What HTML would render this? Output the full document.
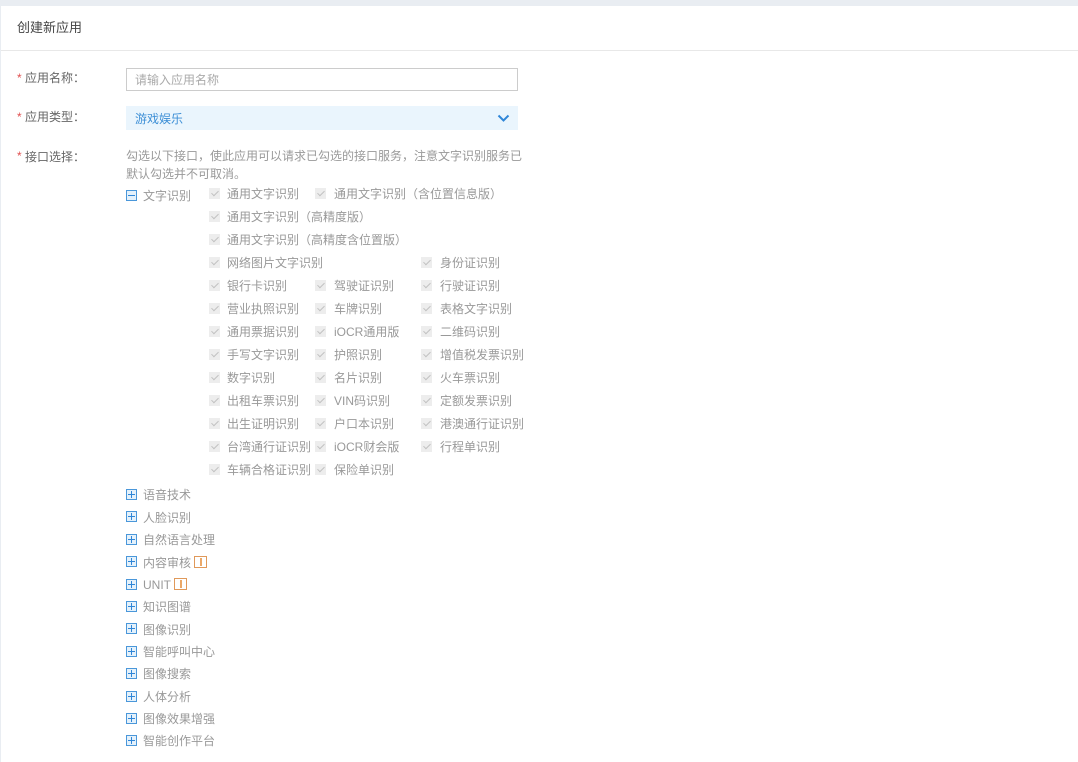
<!DOCTYPE html>
<html lang="zh-CN">
<head>
<meta charset="utf-8">
<title>创建新应用</title>
<style>
html,body{margin:0;padding:0;background:#fff}
body{width:1078px;height:762px;overflow:hidden;position:relative;font-family:"Liberation Sans","Noto Sans CJK SC",sans-serif;font-size:12px;color:#999}
#top{position:absolute;left:0;top:0;width:1078px;height:6px;background:#e9edf2}
#left{position:absolute;left:0;top:6px;width:1px;height:756px;background:#e9edf2}
#hr{position:absolute;left:1px;top:50px;width:1077px;height:1px;background:#e8e8e8}
.a{position:absolute;white-space:nowrap;line-height:18px;height:18px}
.lab{color:#666}
.star{color:#e05050}
#inp{position:absolute;left:126px;top:68px;width:390px;height:21px;border:1px solid #ccc}
#sel{position:absolute;left:126px;top:106px;width:392px;height:24px;background:#eaf5fd}
.c{position:absolute;width:11px;height:11px;background:#ededed;margin:0 0 0 -1px}
.c:after{content:"";position:absolute;left:3.5px;top:1.2px;width:3px;height:6px;border-right:1.5px solid #c2c2c2;border-bottom:1.5px solid #c2c2c2;transform:rotate(45deg)}
.x{position:absolute;width:9px;height:9px;border:1px solid #4a97da;background:#e4f1fb}
.x:before{content:"";position:absolute;left:1px;top:4px;width:7px;height:1px;background:#2f86d8}
.p:after{content:"";position:absolute;left:4px;top:1px;width:1px;height:7px;background:#2f86d8}
.w{position:absolute;width:11px;height:10px;border:1px solid #e0995a}
.w:after{content:"";position:absolute;left:4.5px;top:1px;width:2px;height:8px;background:#eba868}
</style>
</head>
<body>
<div id="top"></div>
<div id="left"></div>
<div class="a" style="left:17px;top:19px;color:#444;font-size:13px">创建新应用</div>
<div id="hr"></div>

<div class="a star" style="left:17px;top:69px">*</div>
<div class="a lab" style="left:25px;top:69px">应用名称&#xFF1A;</div>
<div id="inp"></div>
<div class="a" style="left:135px;top:71px;color:#aaa">请输入应用名称</div>

<div class="a star" style="left:17px;top:108px">*</div>
<div class="a lab" style="left:25px;top:108px">应用类型&#xFF1A;</div>
<div id="sel"></div>
<div class="a" style="left:135px;top:110px;color:#3d8fd6">游戏娱乐</div>
<svg style="position:absolute;left:497px;top:114px" width="13" height="9" viewBox="0 0 13 9"><path d="M1.5 1.5 L6.5 6.5 L11.5 1.5" fill="none" stroke="#2f86d8" stroke-width="2"/></svg>

<div class="a star" style="left:17px;top:147px">*</div>
<div class="a lab" style="left:25px;top:148px">接口选择&#xFF1A;</div>
<div class="a" style="left:126px;top:147px">勾选以下接口&#xFF0C;使此应用可以请求已勾选的接口服务&#xFF0C;注意文字识别服务已</div>
<div class="a" style="left:126px;top:165px">默认勾选并不可取消。</div>

<div class="x" style="left:126px;top:190px"></div>
<div class="a" style="left:143px;top:187px">文字识别</div>

<div class="c" style="left:210px;top:188px"></div>
<div class="a" style="left:227px;top:185px">通用文字识别</div>
<div class="c" style="left:316px;top:188px"></div>
<div class="a" style="left:334px;top:185px">通用文字识别&#xFF08;含位置信息版&#xFF09;</div>

<div class="c" style="left:210px;top:211px"></div>
<div class="a" style="left:227px;top:208px">通用文字识别&#xFF08;高精度版&#xFF09;</div>

<div class="c" style="left:210px;top:234px"></div>
<div class="a" style="left:227px;top:231px">通用文字识别&#xFF08;高精度含位置版&#xFF09;</div>

<div class="c" style="left:210px;top:257px"></div>
<div class="a" style="left:227px;top:254px">网络图片文字识别</div>
<div class="c" style="left:422px;top:257px"></div>
<div class="a" style="left:440px;top:254px">身份证识别</div>

<div class="c" style="left:210px;top:280px"></div>
<div class="a" style="left:227px;top:277px">银行卡识别</div>
<div class="c" style="left:316px;top:280px"></div>
<div class="a" style="left:334px;top:277px">驾驶证识别</div>
<div class="c" style="left:422px;top:280px"></div>
<div class="a" style="left:440px;top:277px">行驶证识别</div>

<div class="c" style="left:210px;top:303px"></div>
<div class="a" style="left:227px;top:300px">营业执照识别</div>
<div class="c" style="left:316px;top:303px"></div>
<div class="a" style="left:334px;top:300px">车牌识别</div>
<div class="c" style="left:422px;top:303px"></div>
<div class="a" style="left:440px;top:300px">表格文字识别</div>

<div class="c" style="left:210px;top:326px"></div>
<div class="a" style="left:227px;top:323px">通用票据识别</div>
<div class="c" style="left:316px;top:326px"></div>
<div class="a" style="left:334px;top:323px">iOCR通用版</div>
<div class="c" style="left:422px;top:326px"></div>
<div class="a" style="left:440px;top:323px">二维码识别</div>

<div class="c" style="left:210px;top:349px"></div>
<div class="a" style="left:227px;top:346px">手写文字识别</div>
<div class="c" style="left:316px;top:349px"></div>
<div class="a" style="left:334px;top:346px">护照识别</div>
<div class="c" style="left:422px;top:349px"></div>
<div class="a" style="left:440px;top:346px">增值税发票识别</div>

<div class="c" style="left:210px;top:372px"></div>
<div class="a" style="left:227px;top:369px">数字识别</div>
<div class="c" style="left:316px;top:372px"></div>
<div class="a" style="left:334px;top:369px">名片识别</div>
<div class="c" style="left:422px;top:372px"></div>
<div class="a" style="left:440px;top:369px">火车票识别</div>

<div class="c" style="left:210px;top:395px"></div>
<div class="a" style="left:227px;top:392px">出租车票识别</div>
<div class="c" style="left:316px;top:395px"></div>
<div class="a" style="left:334px;top:392px">VIN码识别</div>
<div class="c" style="left:422px;top:395px"></div>
<div class="a" style="left:440px;top:392px">定额发票识别</div>

<div class="c" style="left:210px;top:418px"></div>
<div class="a" style="left:227px;top:415px">出生证明识别</div>
<div class="c" style="left:316px;top:418px"></div>
<div class="a" style="left:334px;top:415px">户口本识别</div>
<div class="c" style="left:422px;top:418px"></div>
<div class="a" style="left:440px;top:415px">港澳通行证识别</div>

<div class="c" style="left:210px;top:441px"></div>
<div class="a" style="left:227px;top:438px">台湾通行证识别</div>
<div class="c" style="left:316px;top:441px"></div>
<div class="a" style="left:334px;top:438px">iOCR财会版</div>
<div class="c" style="left:422px;top:441px"></div>
<div class="a" style="left:440px;top:438px">行程单识别</div>

<div class="c" style="left:210px;top:464px"></div>
<div class="a" style="left:227px;top:461px">车辆合格证识别</div>
<div class="c" style="left:316px;top:464px"></div>
<div class="a" style="left:334px;top:461px">保险单识别</div>

<div class="x p" style="left:126px;top:489px"></div><div class="a" style="left:143px;top:486px">语音技术</div>
<div class="x p" style="left:126px;top:511px"></div><div class="a" style="left:143px;top:509px">人脸识别</div>
<div class="x p" style="left:126px;top:534px"></div><div class="a" style="left:143px;top:531px">自然语言处理</div>
<div class="x p" style="left:126px;top:556px"></div><div class="a" style="left:143px;top:554px">内容审核</div>
<div class="w" style="left:194px;top:556px"></div>
<div class="x p" style="left:126px;top:579px"></div><div class="a" style="left:143px;top:576px">UNIT</div>
<div class="w" style="left:174px;top:578px"></div>
<div class="x p" style="left:126px;top:601px"></div><div class="a" style="left:143px;top:598px">知识图谱</div>
<div class="x p" style="left:126px;top:623px"></div><div class="a" style="left:143px;top:621px">图像识别</div>
<div class="x p" style="left:126px;top:646px"></div><div class="a" style="left:143px;top:643px">智能呼叫中心</div>
<div class="x p" style="left:126px;top:668px"></div><div class="a" style="left:143px;top:665px">图像搜索</div>
<div class="x p" style="left:126px;top:691px"></div><div class="a" style="left:143px;top:688px">人体分析</div>
<div class="x p" style="left:126px;top:713px"></div><div class="a" style="left:143px;top:710px">图像效果增强</div>
<div class="x p" style="left:126px;top:735px"></div><div class="a" style="left:143px;top:732px">智能创作平台</div>
</body>
</html>
